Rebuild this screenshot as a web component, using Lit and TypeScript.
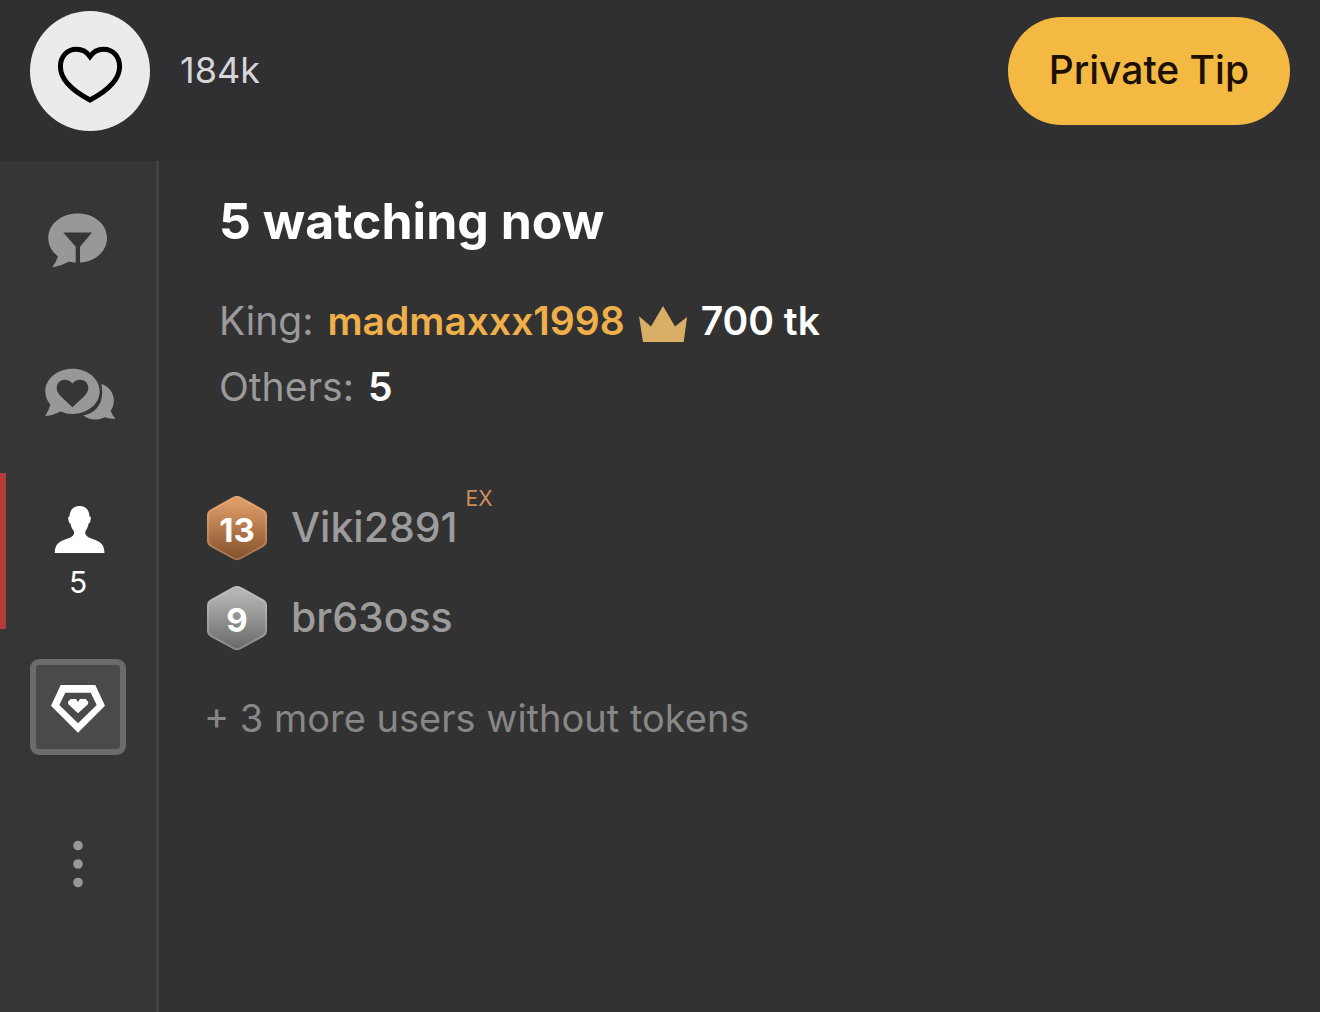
import { LitElement, html, css, svg } from "lit";
import { customElement, property } from "lit/decorators.js";

@customElement("level-badge")
class LevelBadge extends LitElement {
  @property() level = "";
  @property() tone = "bronze";

  static styles = css`
    :host { display: block; }
    .badge { display: grid; place-items: center; width: 60px; height: 66px; }
    .badge > * { grid-area: 1 / 1; }
    .shape { display: block; width: 60px; height: 66px; }
    .level { color: #fff; font-size: 33px; line-height: 40px; font-weight: 700; padding-top: 4px; }
    .bronze .start { stop-color: #dc9a66; }
    .bronze .end { stop-color: #84512b; }
    .bronze .rim-start { stop-color: #e2a473; }
    .bronze .rim-end { stop-color: #a27350; }
    .silver .start { stop-color: #b4b4b4; }
    .silver .end { stop-color: #696969; }
    .silver .rim-start { stop-color: #bcbcbc; }
    .silver .rim-end { stop-color: #8b8b8b; }
  `;

  render() {
    const d = "M26 3.2Q30 .8 34 3.2L56 15.4Q59 17.2 59 20.8V45.4Q59 49 56 50.8L34 63Q30 65.4 26 63L4 50.8Q1 49 1 45.4V20.8Q1 17.2 4 15.4Z";
    return html`<span class="badge ${this.tone}">
      <svg class="shape" viewBox="0 0 60 66" aria-hidden="true">
        <defs>
          <linearGradient id="fill" x1="0" y1="0" x2="0" y2="1">
            <stop class="start" offset="0.1"></stop><stop class="end" offset="1"></stop>
          </linearGradient>
          <linearGradient id="rim" x1="0" y1="0" x2="0" y2="1">
            <stop class="rim-start" offset="0.1"></stop><stop class="rim-end" offset="1"></stop>
          </linearGradient>
        </defs>
        <path d=${d} fill="url(#fill)" stroke="url(#rim)" stroke-width="2"></path>
      </svg>
      <span class="level">${this.level}</span>
    </span>`;
  }
}

const filterChat = svg`
  <path fill-rule="evenodd" d="M47.700 22.500C64 22.500 77 33 77 47C77 60.500 65 71 50 71.500V55.800L62 41.500H33.300L45.700 55.800V71.500Q42 71.500 39.300 70.500Q31 75 22.300 76.500Q26 71.500 28 65.200C22 61 18.300 54.500 18.300 47C18.300 33 31.500 22.500 47.700 22.500Z"></path>`;

const loveChat = svg`
  <path fill-rule="evenodd" d="M42.500 21.700C57.500 21.700 69.700 31.800 69.700 44.300C69.700 56.800 57.500 67 42.500 67Q36 67 30.700 64.500Q23 68.500 15 69.300Q19 63.500 20.300 57.500C17 53.700 15.300 49.200 15.300 44.300C15.300 31.800 27.500 21.700 42.500 21.700ZM42.400 36.500C40 33.500 37.500 32.500 34.500 32.700C29.800 33 26.700 36.500 26.700 41.300C26.700 44.500 28.500 47 31 49.500L42.400 60.300L54 49.500C56.500 47 58.300 44.500 58.300 41.300C58.300 36.500 55 33 50.500 32.700C47.500 32.500 44.800 33.500 42.400 36.500Z"></path>
  <path d="M71.300 37C79 39.500 83.800 46 83.800 53C83.800 57 83 60.500 80.700 63.700Q82.500 68.500 85.500 72Q79.500 72 74.700 70.300C68 73.800 59 73.500 53.300 68.300C65 67 75.500 56 71.300 37Z"></path>`;

const gem = svg`
  <path fill-rule="evenodd" d="M30.700 26H65.300L75 46.700L48 73.700L21 46.700ZM35.300 33.700L29.300 46L48 64.300L66.700 46L60.700 33.700Z"></path>
  <path d="M40.700 40H46L48 43L50 40H55.700L58.300 43L58 45.300L48 54.300L38.300 45.300L38 42.700Z"></path>`;

const more = svg`
  <circle cx="48" cy="30.500" r="4.800"></circle>
  <circle cx="48" cy="49" r="4.800"></circle>
  <circle cx="48" cy="67.500" r="4.800"></circle>`;

@customElement("app-root")
class AppRoot extends LitElement {
  static styles = css`
    :host {
      display: block;
      font-family: Inter, "Liberation Sans", sans-serif;
      color: #fff;
      background: #323232;
    }
    button { font: inherit; color: inherit; border: 0; padding: 0; margin: 0; background: none; cursor: pointer; }
    svg { display: block; }
    .page { display: flex; flex-direction: column; min-height: 100vh; }

    .topbar {
      display: flex; align-items: center; gap: 30px;
      padding: 11px 30px 30px; background: #303032;
    }
    .like { width: 120px; height: 120px; border-radius: 50%; background: #ebebeb; }
    .heart { width: 120px; height: 120px; fill: none; stroke: #000; stroke-width: 5; }
    .count { font-size: 36px; line-height: 46px; padding-bottom: 2px; color: #d6d6d8; }
    .tip {
      margin-left: auto; padding: 29px 41px 31px; border-radius: 54px;
      background: #f4b942; color: #1c1000;
      font-size: 39px; line-height: 48px; font-weight: 500;
    }

    .body { display: flex; flex: 1; }
    .rail { display: flex; flex-direction: column; flex: none; width: 156px; background: #363636; border-right: 3px solid #424242; }
    .tab {
      display: flex; flex-direction: column; align-items: center; justify-content: center;
      box-sizing: border-box; width: 156px; height: 156px; fill: #989898;
    }
    .active { border-left: 6px solid #b53a3a; padding: 4px 6px 0 0; fill: #fff; }
    .icon { width: 96px; height: 96px; }
    .person { width: 96px; height: 48px; }
    .tab-count { font-size: 30px; line-height: 36px; padding-top: 10px; }
    .frame { box-sizing: border-box; width: 96px; height: 96px; border: 6px solid #6b6b6b; border-radius: 9px; background: #4a4a4a; fill: #fff; }
    .frame .icon { margin: -6px; }

    .panel { flex: 1; min-width: 0; padding: 30px 45px; }
    .summary { padding-left: 15px; }
    .title { margin: 0 0 37px; font-size: 50px; line-height: 60px; font-weight: 700; }
    .line { display: flex; align-items: center; gap: 14px; margin: 0; font-size: 39px; line-height: 66px; color: #9a9a9a; }
    .strong { font-weight: 600; color: #fff; }
    .king { font-weight: 600; color: #efb04c; text-decoration: none; }
    .crown { width: 48px; height: 36px; padding-top: 5px; fill: #d9af67; }
    .users { list-style: none; margin: 63px 0 0; padding: 0 3px; }
    .user { display: flex; align-items: center; gap: 24px; height: 90px; }
    .name { font-size: 41px; line-height: 52px; padding-bottom: 2px; font-weight: 500; color: #9c9c9c; text-decoration: none; }
    .tag { align-self: flex-start; font-size: 21px; line-height: 24px; color: #cf8f59; }
    .user .tag { margin-left: -16px; padding-top: 4px; }
    .rest { margin: 31px 0 0; font-size: 38px; line-height: 48px; color: #878787; }
  `;

  tab(label: string, icon: unknown) {
    return html`<button class="tab" aria-label=${label}>
      <svg class="icon" viewBox="0 0 96 96" aria-hidden="true">${icon}</svg>
    </button>`;
  }

  render() {
    return html`<div class="page">
      <header class="topbar">
        <button class="like" aria-label="Like">
          <svg class="heart" viewBox="0 0 120 120" aria-hidden="true">
            <path d="M60 45.500C56.500 40.500 52 38.300 46.500 38.300C37 38.300 30.400 45.500 30.400 55.500C30.400 68.500 43 80 60 89C77 80 89.600 68.500 89.600 55.500C89.600 45.500 83 38.300 73.500 38.300C68 38.300 63.500 40.500 60 45.500Z"></path>
          </svg>
        </button>
        <span class="count">184k</span>
        <button class="tip">Private Tip</button>
      </header>
      <div class="body">
        <nav class="rail">
          ${this.tab("Filter chat", filterChat)}
          ${this.tab("Private messages", loveChat)}
          <button class="tab active" aria-label="Users, 5">
            <svg class="person" viewBox="0 0 96 48" aria-hidden="true">
              <path d="M49.500 0C55.500 0 59.300 4 59.500 10.500C61 10.500 61 12 60.500 14.500C60 16.500 59.500 17.300 58.700 17.300C58 21 56.800 23.500 55.300 25.500V28C57 31 60 32.300 64 33.500C71 35.800 74.300 39 74.500 47H24.700C25 39 28.300 35.800 35 33.500C39 32.300 42.500 31 44 28V25.500C42.500 23.500 41 21 40.300 17.300C39.500 17.300 39 16.500 38.500 14.500C38 12 38 10.500 39.500 10.500C39.700 4 43.500 0 49.500 0Z"></path>
            </svg>
            <span class="tab-count">5</span>
          </button>
          <button class="tab" aria-label="Fan club">
            <span class="frame"><svg class="icon" viewBox="0 0 96 96" aria-hidden="true">${gem}</svg></span>
          </button>
          ${this.tab("More", more)}
        </nav>
        <main class="panel">
          <section class="summary">
            <h1 class="title">5 watching now</h1>
            <p class="line">
              <span>King:</span>
              <a class="king" href="#madmaxxx1998">madmaxxx1998</a>
              <svg class="crown" viewBox="0 0 48 36" aria-hidden="true"><path d="M24 0L36 20.500L48 11L44.700 36H4L0 10.300L12 20.500Z"></path></svg>
              <span class="strong">700 tk</span>
            </p>
            <p class="line"><span>Others:</span><span class="strong">5</span></p>
          </section>
          <ul class="users">
            <li class="user">
              <level-badge level="13" tone="bronze"></level-badge>
              <a class="name" href="#Viki2891">Viki2891</a>
              <span class="tag">EX</span>
            </li>
            <li class="user">
              <level-badge level="9" tone="silver"></level-badge>
              <a class="name" href="#br63oss">br63oss</a>
            </li>
          </ul>
          <p class="rest">+ 3 more users without tokens</p>
        </main>
      </div>
    </div>`;
  }
}
